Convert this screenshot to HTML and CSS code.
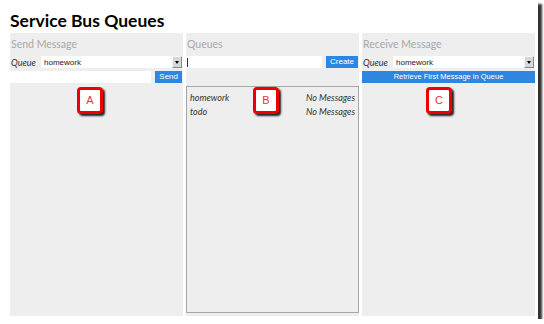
FILE: index.html
```html
<!DOCTYPE html>
<html lang="en">
<head>
    <meta charset="UTF-8">
    <title>Service Bus Queues</title>
    <link rel="stylesheet" href="styles.css">
</head>
<body>
    <div class="frame">
        <h1>Service Bus Queues</h1>

        <div class="columns">
            <!-- Send -->
            <div class="panel">
                <h2>Send Message</h2>
                <div class="queue-row">
                    <span class="label">Queue</span>
                    <div class="select">
                        <span>homework</span>
                        <span class="arrow"></span>
                    </div>
                </div>
                <div class="input-row">
                    <div class="input"></div>
                    <button class="btn">Send</button>
                </div>
                <div class="callout callout-a">A</div>
            </div>

            <!-- Queues -->
            <div class="panel">
                <h2>Queues</h2>
                <div class="input-row first">
                    <div class="input"><span class="caret"></span></div>
                    <button class="btn">Create</button>
                </div>
                <div class="queue-list">
                    <div class="queue-item"><span>homework</span><span>No Messages</span></div>
                    <div class="queue-item"><span>todo</span><span>No Messages</span></div>
                </div>
                <div class="callout callout-b">B</div>
            </div>

            <!-- Receive -->
            <div class="panel">
                <h2>Receive Message</h2>
                <div class="queue-row">
                    <span class="label">Queue</span>
                    <div class="select">
                        <span>homework</span>
                        <span class="arrow"></span>
                    </div>
                </div>
                <button class="btn wide">Retrieve First Message in Queue</button>
                <div class="callout callout-c">C</div>
            </div>
        </div>
    </div>
</body>
</html>
```

FILE: styles.css
```css
body {
    margin: 0;
    background-color: white;
    font-family: Lato, "Open Sans", Arial, sans-serif;
    color: #222;
}

.frame {
    width: 538px;
    height: 319px;
    box-sizing: border-box;
    padding: 8px 3px 3px 10px;
    background-color: white;
    box-shadow: 4px 4px 2px #333;
}

h1 {
    margin: 0;
    font-size: 17.5px;
    line-height: 25px;
    font-weight: bold;
    color: #000;
}

.columns {
    display: grid;
    grid-template-columns: 173px 173px 173px;
    gap: 3px;
    height: 283px;
}

.panel {
    position: relative;
    background-color: #eeeeee;
    display: flex;
    flex-direction: column;
}

.panel h2 {
    margin: 0;
    height: 23px;
    padding-left: 1px;
    font-size: 10.5px;
    line-height: 22px;
    font-weight: normal;
    color: #a8a8a8;
}

.queue-row {
    display: flex;
    align-items: center;
    height: 12px;
}

.label {
    width: 30px;
    padding-left: 1px;
    font-size: 9px;
    font-style: italic;
    color: #333;
}

.select {
    flex: 1;
    display: flex;
    align-items: center;
    justify-content: space-between;
    height: 12px;
    background-color: white;
    font-family: Arial, "Liberation Sans", sans-serif;
    font-size: 8px;
    padding-left: 3px;
}

.arrow {
    width: 8px;
    height: 10px;
    margin-right: 1px;
    background-color: #d8d8d8;
    border: 1px solid #888;
    border-top-color: #f4f4f4;
    border-left-color: #f4f4f4;
    position: relative;
}

.arrow::after {
    content: "";
    position: absolute;
    left: 2px;
    top: 4px;
    border-left: 2px solid transparent;
    border-right: 2px solid transparent;
    border-top: 3px solid #000;
}

.input-row {
    display: flex;
    gap: 4px;
    height: 12px;
    margin-top: 3px;
    padding-right: 1px;
}

.input-row.first {
    margin-top: 0;
}

.input {
    flex: 1;
    background-color: white;
    display: flex;
    align-items: center;
}

.caret {
    width: 1px;
    height: 9px;
    background-color: #333;
    margin-left: 1px;
}

.btn {
    border: none;
    margin: 0;
    padding: 0 4px;
    height: 12px;
    background-color: #2f86e0;
    color: white;
    font-family: Arial, "Liberation Sans", sans-serif;
    font-size: 8px;
    line-height: 12px;
}

.btn.wide {
    margin-top: 3px;
    width: 100%;
    text-align: center;
    font-size: 7.5px;
}

.queue-list {
    margin-top: 18px;
    height: 227px;
    border: 1px solid #a6a6a6;
    box-sizing: border-box;
    padding: 4px 3px 0 3px;
}

.queue-item {
    display: flex;
    justify-content: space-between;
    font-size: 9px;
    font-style: italic;
    line-height: 14px;
    color: #333;
}

/* callout labels */
.callout {
    position: absolute;
    top: 54px;
    width: 20px;
    height: 21px;
    border: 3px solid #ee0000;
    border-radius: 4px;
    background-color: white;
    color: #f03030;
    font-family: Arial, "Liberation Sans", sans-serif;
    font-size: 11px;
    line-height: 21px;
    text-align: center;
    box-shadow: 2px 2px 2px #222;
}

.callout-a {
    left: 67px;
}

.callout-b {
    left: 67px;
}

.callout-c {
    left: 64px;
}
```
